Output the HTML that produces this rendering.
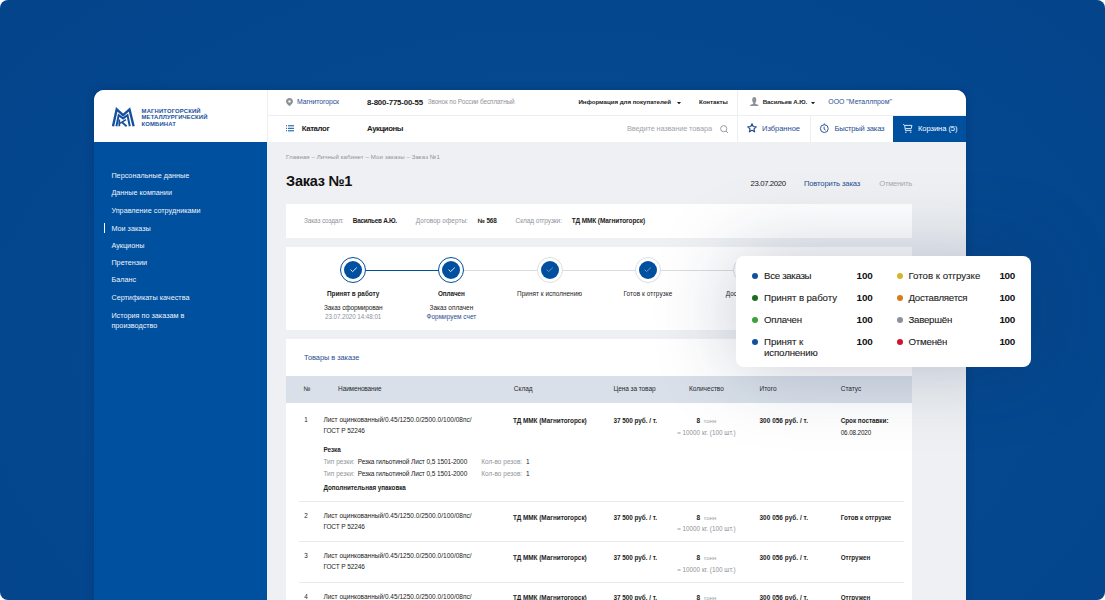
<!DOCTYPE html>
<html><head><meta charset="utf-8"><style>
html,body{margin:0;padding:0;width:1105px;height:600px;overflow:hidden;background:#fff}
#bg{position:absolute;left:0;top:0;width:1105px;height:600px;border-radius:8px;overflow:hidden;
background:radial-gradient(ellipse 820px 560px at 560px 360px, #074b97 0%, #05488f 55%, #03438a 100%)}
.t{position:absolute;white-space:nowrap;line-height:1;font-family:"Liberation Sans", sans-serif}
</style></head><body><div id="bg">
<div style="position:absolute;left:94px;top:90px;width:872px;height:520px;background:#eef0f3;border-radius:10px 10px 0 0;box-shadow:0 0 8px rgba(0,25,70,0.25)"></div>
<div style="position:absolute;left:94px;top:90px;width:173px;height:52px;background:#fff;border-radius:10px 0 0 0"></div>
<div style="position:absolute;left:94px;top:142px;width:173px;height:470px;background:#0050a0"></div>
<div style="position:absolute;left:267px;top:90px;width:699px;height:52px;background:#fff;border-radius:0 10px 0 0"></div>
<div style="position:absolute;left:267px;top:90px;width:1px;height:52px;background:#eceef1"></div>
<div style="position:absolute;left:267px;top:115px;width:699px;height:1px;background:#eceef1"></div>
<div style="position:absolute;left:737px;top:90px;width:1px;height:52px;background:#eceef1"></div>
<div style="position:absolute;left:810px;top:116px;width:1px;height:26px;background:#eceef1"></div>
<div style="position:absolute;left:893px;top:116px;width:73px;height:26px;background:#0050a0"></div>
<svg style="position:absolute;left:109px;top:106px" width="28" height="22" viewBox="0 0 28 22">
<g fill="none" stroke="#17509c" stroke-linejoin="miter" stroke-miterlimit="4" stroke-linecap="butt">
<polyline stroke-width="2.4" points="4,20.2 7.7,3.4 14.1,9.2 20.5,3.4 24.6,20.2"/>
<polyline stroke-width="2" points="7.4,20.2 9.7,9.2 14.1,12.4 18.5,9.2 20.8,20.2"/>
<path stroke-width="1.8" d="M10.3 13.6V20.2"/>
<path stroke-width="1.6" d="M11 17.4L17 13.6"/>
<path stroke-width="1.8" d="M13 16.2L17.6 20.2"/>
</g>
</svg>
<div class="t" style="left:141.60px;top:109.00px;font-size:5.9px;color:#17509c;font-weight:700;letter-spacing:0.153px;">МАГНИТОГОРСКИЙ</div>
<div class="t" style="left:141.60px;top:115.00px;font-size:5.9px;color:#17509c;font-weight:700;letter-spacing:0.106px;">МЕТАЛЛУРГИЧЕСКИЙ</div>
<div class="t" style="left:141.60px;top:122.00px;font-size:5.9px;color:#17509c;font-weight:700;letter-spacing:0.135px;">КОМБИНАТ</div>
<svg style="position:absolute;left:286px;top:98px" width="7" height="8" viewBox="0 0 7 8"><path d="M3.5 0C1.6 0 0 1.5 0 3.4 0 5.5 3.5 8 3.5 8S7 5.5 7 3.4C7 1.5 5.4 0 3.5 0Zm0 4.6a1.2 1.2 0 1 1 0-2.4 1.2 1.2 0 0 1 0 2.4Z" fill="#8d9299"/></svg>
<div class="t" style="left:297.00px;top:99.00px;font-size:6.9px;color:#1f4e93;font-weight:400;letter-spacing:-0.106px;">Магнитогорск</div>
<div class="t" style="left:367.00px;top:99.00px;font-size:7.8px;color:#161616;font-weight:700;letter-spacing:-0.141px;">8-800-775-00-55</div>
<div class="t" style="left:427.70px;top:99.00px;font-size:6.4px;color:#8f949a;font-weight:400;letter-spacing:-0.101px;">Звонок по России бесплатный</div>
<div class="t" style="left:578.40px;top:99.00px;font-size:6.2px;color:#222222;font-weight:700;letter-spacing:-0.052px;">Информация для покупателей</div>
<svg style="position:absolute;left:676.6px;top:101.6px" width="4" height="2.4" viewBox="0 0 4 2.4"><path d="M0 0H4L2 2.4Z" fill="#1e1e1e"/></svg>
<div class="t" style="left:698.90px;top:99.00px;font-size:6.2px;color:#222222;font-weight:700;letter-spacing:-0.042px;">Контакты</div>
<svg style="position:absolute;left:749.5px;top:96.8px" width="9" height="9.2" viewBox="0 0 9 9.2"><ellipse cx="4.25" cy="3.1" rx="2.05" ry="3" fill="#8d9299"/><path d="M3.3 5.6H5.2L5.5 6.9C7 7.1 8.6 7.6 8.6 9.1H0C0 7.6 1.6 7.1 3 6.9Z" fill="#8d9299"/></svg>
<div class="t" style="left:762.70px;top:99.00px;font-size:6.2px;color:#222222;font-weight:700;letter-spacing:-0.133px;">Васильев А.Ю.</div>
<svg style="position:absolute;left:811px;top:101.6px" width="4" height="2.4" viewBox="0 0 4 2.4"><path d="M0 0H4L2 2.4Z" fill="#1e1e1e"/></svg>
<div class="t" style="left:828.30px;top:99.00px;font-size:6.9px;color:#1f4e93;font-weight:400;letter-spacing:0.014px;">ООО "Металлпром"</div>
<svg style="position:absolute;left:286px;top:125px" width="8" height="6.5" viewBox="0 0 8 6.5"><g fill="#0050a0"><rect x="0" y="0.3" width="1" height="1"/><rect x="2" y="0.3" width="6" height="1"/><rect x="0" y="2.8" width="1" height="1"/><rect x="2" y="2.8" width="6" height="1"/><rect x="0" y="5.3" width="1" height="1"/><rect x="2" y="5.3" width="6" height="1"/></g></svg>
<div class="t" style="left:301.70px;top:125.00px;font-size:7.8px;color:#222222;font-weight:700;letter-spacing:-0.360px;">Каталог</div>
<div class="t" style="left:367.00px;top:125.00px;font-size:7.8px;color:#222222;font-weight:700;letter-spacing:-0.450px;">Аукционы</div>
<div class="t" style="left:627.00px;top:125.00px;font-size:7.4px;color:#a0a5ab;font-weight:400;letter-spacing:-0.137px;">Введите название товара</div>
<svg style="position:absolute;left:720px;top:124.5px" width="8.5" height="8.5" viewBox="0 0 8.5 8.5"><circle cx="3.7" cy="3.7" r="3.1" fill="none" stroke="#8d9299" stroke-width="0.9"/><path d="M6 6 L8.1 8.1" stroke="#8d9299" stroke-width="0.9"/></svg>
<svg style="position:absolute;left:747px;top:123.3px" width="10" height="9.6" viewBox="0 0 24 23"><path d="M12 1.8l3 6.6 7.2.8-5.4 4.9 1.5 7.1L12 17.6l-6.3 3.6 1.5-7.1-5.4-4.9 7.2-.8Z" fill="none" stroke="#234e8c" stroke-width="2.9" stroke-linejoin="round"/></svg>
<div class="t" style="left:762.00px;top:125.00px;font-size:7.6px;color:#1f4e93;font-weight:400;letter-spacing:-0.057px;">Избранное</div>
<svg style="position:absolute;left:819px;top:123px" width="11" height="11" viewBox="0 0 11 11"><g fill="none" stroke="#234e8c" stroke-width="0.95"><circle cx="5.3" cy="5.6" r="3.9"/><path d="M5.3 0.5V1.7"/><path d="M5.1 3.6V6.1L6.6 7.1"/></g></svg>
<div class="t" style="left:834.40px;top:125.00px;font-size:7.6px;color:#1f4e93;font-weight:400;letter-spacing:-0.200px;">Быстрый заказ</div>
<svg style="position:absolute;left:902px;top:123px" width="11" height="11" viewBox="0 0 11 11"><g fill="none" stroke="#e6f0ff" stroke-width="0.95"><path d="M1.1 1.3L2.7 2.4"/><path d="M2.7 2.4H9.9L9.2 5.6H3.3"/><path d="M2.7 2.4L3.4 7.4H9.6"/></g><g fill="#e6f0ff"><rect x="3.1" y="8.7" width="1.5" height="1"/><rect x="7.9" y="8.7" width="1.5" height="1"/></g></svg>
<div class="t" style="left:918.00px;top:125.00px;font-size:7.6px;color:#fff;font-weight:400;letter-spacing:-0.077px;">Корзина (5)</div>
<div class="t" style="left:111.40px;top:172.00px;font-size:7.25px;color:#eef3fa;font-weight:400;">Персональные данные</div>
<div class="t" style="left:111.40px;top:189.00px;font-size:7.25px;color:#eef3fa;font-weight:400;">Данные компании</div>
<div class="t" style="left:111.40px;top:207.00px;font-size:7.25px;color:#eef3fa;font-weight:400;">Управление сотрудниками</div>
<div class="t" style="left:111.40px;top:225.00px;font-size:7.25px;color:#eef3fa;font-weight:400;">Мои заказы</div>
<div class="t" style="left:111.40px;top:242.00px;font-size:7.25px;color:#eef3fa;font-weight:400;">Аукционы</div>
<div class="t" style="left:111.40px;top:259.00px;font-size:7.25px;color:#eef3fa;font-weight:400;">Претензии</div>
<div class="t" style="left:111.40px;top:276.00px;font-size:7.25px;color:#eef3fa;font-weight:400;">Баланс</div>
<div class="t" style="left:111.40px;top:294.00px;font-size:7.25px;color:#eef3fa;font-weight:400;">Сертификаты качества</div>
<div class="t" style="left:111.40px;top:312.00px;font-size:7.25px;color:#eef3fa;font-weight:400;">История по заказам в</div>
<div class="t" style="left:111.40px;top:322.00px;font-size:7.25px;color:#eef3fa;font-weight:400;">производство</div>
<div style="position:absolute;left:103.5px;top:223px;width:1.5px;height:9.5px;background:#fff"></div>
<div class="t" style="left:286.00px;top:154.00px;font-size:6.1px;color:#8f949a;font-weight:400;letter-spacing:0.079px;">Главная – Личный кабинет – Мои заказы – Заказ №1</div>
<div class="t" style="left:286.10px;top:174.00px;font-size:14.5px;color:#111;font-weight:700;letter-spacing:-0.264px;">Заказ №1</div>
<div class="t" style="left:750.60px;top:180.00px;font-size:7.8px;color:#222222;font-weight:400;letter-spacing:-0.404px;">23.07.2020</div>
<div class="t" style="left:803.90px;top:180.00px;font-size:7.6px;color:#1f4e93;font-weight:400;letter-spacing:-0.116px;">Повторить заказ</div>
<div class="t" style="left:879.30px;top:180.00px;font-size:7.6px;color:#a6aab0;font-weight:400;letter-spacing:-0.266px;">Отменить</div>
<div style="position:absolute;left:286px;top:204px;width:626px;height:34px;background:#fff"></div>
<div class="t" style="left:304.00px;top:218.00px;font-size:6.5px;color:#8f949a;font-weight:400;letter-spacing:-0.159px;">Заказ создал:</div>
<div class="t" style="left:352.80px;top:218.00px;font-size:6.4px;color:#222222;font-weight:700;letter-spacing:-0.279px;">Васильев А.Ю.</div>
<div class="t" style="left:415.80px;top:218.00px;font-size:6.5px;color:#8f949a;font-weight:400;letter-spacing:0.016px;">Договор оферты:</div>
<div class="t" style="left:477.70px;top:218.00px;font-size:6.4px;color:#222222;font-weight:700;letter-spacing:-0.098px;">№ 568</div>
<div class="t" style="left:515.60px;top:218.00px;font-size:6.5px;color:#8f949a;font-weight:400;letter-spacing:-0.079px;">Склад отгрузки:</div>
<div class="t" style="left:571.70px;top:218.00px;font-size:6.5px;color:#222222;font-weight:700;letter-spacing:-0.096px;">ТД ММК (Магнитогорск)</div>
<div style="position:absolute;left:286px;top:247px;width:626px;height:83px;background:#fff"></div>
<div style="position:absolute;left:353px;top:269.6px;width:98.4px;height:1px;background:#0050a0"></div>
<div style="position:absolute;left:451.4px;top:269.6px;width:393.1px;height:1px;background:#d9dce0"></div>
<div style="position:absolute;left:340.10px;top:256.9px;width:24.2px;height:24.2px;border:1px solid #0050a0;border-radius:50%;background:#fff;box-sizing:content-box"></div>
<div style="position:absolute;left:344.20px;top:261px;width:18px;height:18px;border-radius:50%;background:#0050a0"></div>
<svg style="position:absolute;left:349.60px;top:267.4px" width="7.4" height="5.4" viewBox="0 0 7.4 5.4"><path d="M0.6 2.7L2.6 4.6L6.8 0.6" fill="none" stroke="#fff" stroke-width="0.9"/></svg>
<div style="position:absolute;left:438.30px;top:256.9px;width:24.2px;height:24.2px;border:1px solid #0050a0;border-radius:50%;background:#fff;box-sizing:content-box"></div>
<div style="position:absolute;left:442.40px;top:261px;width:18px;height:18px;border-radius:50%;background:#0050a0"></div>
<svg style="position:absolute;left:447.80px;top:267.4px" width="7.4" height="5.4" viewBox="0 0 7.4 5.4"><path d="M0.6 2.7L2.6 4.6L6.8 0.6" fill="none" stroke="#fff" stroke-width="0.9"/></svg>
<div style="position:absolute;left:536.50px;top:256.9px;width:24.2px;height:24.2px;border:1px solid #dcdfe3;border-radius:50%;background:#fff;box-sizing:content-box"></div>
<div style="position:absolute;left:540.60px;top:261px;width:18px;height:18px;border-radius:50%;background:#0050a0"></div>
<svg style="position:absolute;left:546.00px;top:267.4px" width="7.4" height="5.4" viewBox="0 0 7.4 5.4"><path d="M0.6 2.7L2.6 4.6L6.8 0.6" fill="none" stroke="#7f9cc8" stroke-width="0.9"/></svg>
<div style="position:absolute;left:634.80px;top:256.9px;width:24.2px;height:24.2px;border:1px solid #dcdfe3;border-radius:50%;background:#fff;box-sizing:content-box"></div>
<div style="position:absolute;left:638.90px;top:261px;width:18px;height:18px;border-radius:50%;background:#0050a0"></div>
<svg style="position:absolute;left:644.30px;top:267.4px" width="7.4" height="5.4" viewBox="0 0 7.4 5.4"><path d="M0.6 2.7L2.6 4.6L6.8 0.6" fill="none" stroke="#7f9cc8" stroke-width="0.9"/></svg>
<div style="position:absolute;left:733.10px;top:256.9px;width:24.2px;height:24.2px;border:1px solid #dcdfe3;border-radius:50%;background:#fff;box-sizing:content-box"></div>
<div style="position:absolute;left:831.40px;top:256.9px;width:24.2px;height:24.2px;border:1px solid #dcdfe3;border-radius:50%;background:#fff;box-sizing:content-box"></div>
<div class="t" style="left:353.20px;top:291.00px;font-size:6.4px;color:#222222;font-weight:700;letter-spacing:-0.013px;transform:translateX(-50%);transform-origin:50% 0;">Принят в работу</div>
<div class="t" style="left:451.40px;top:291.00px;font-size:6.4px;color:#222222;font-weight:700;letter-spacing:-0.064px;transform:translateX(-50%);transform-origin:50% 0;">Оплачен</div>
<div class="t" style="left:549.60px;top:291.00px;font-size:6.4px;color:#222222;font-weight:400;letter-spacing:0.036px;transform:translateX(-50%);transform-origin:50% 0;">Принят к исполнению</div>
<div class="t" style="left:647.90px;top:291.00px;font-size:6.4px;color:#222222;font-weight:400;letter-spacing:0.102px;transform:translateX(-50%);transform-origin:50% 0;">Готов к отгрузке</div>
<div class="t" style="left:746.20px;top:291.00px;font-size:6.4px;color:#222222;font-weight:400;transform:translateX(-50%);transform-origin:50% 0;">Доставляется</div>
<div class="t" style="left:844.50px;top:291.00px;font-size:6.4px;color:#222222;font-weight:400;transform:translateX(-50%);transform-origin:50% 0;">Завершён</div>
<div class="t" style="left:353.30px;top:305.00px;font-size:6.5px;color:#222222;font-weight:400;letter-spacing:-0.118px;transform:translateX(-50%);transform-origin:50% 0;">Заказ сформирован</div>
<div class="t" style="left:353.10px;top:314.00px;font-size:6.3px;color:#8d9299;font-weight:400;letter-spacing:-0.079px;transform:translateX(-50%);transform-origin:50% 0;">23.07.2020 14:48:01</div>
<div class="t" style="left:451.40px;top:305.00px;font-size:6.5px;color:#222222;font-weight:400;transform:translateX(-50%);transform-origin:50% 0;">Заказ оплачен</div>
<div class="t" style="left:451.40px;top:314.00px;font-size:6.5px;color:#1f4e93;font-weight:400;transform:translateX(-50%);transform-origin:50% 0;">Формируем счет</div>
<div style="position:absolute;left:286px;top:338.5px;width:626px;height:300px;background:#fff"></div>
<div class="t" style="left:304.10px;top:354.00px;font-size:7.4px;color:#1f4e93;font-weight:400;letter-spacing:-0.044px;">Товары в заказе</div>
<div style="position:absolute;left:286px;top:376px;width:626px;height:27px;background:#d9e0e9"></div>
<div class="t" style="left:303.50px;top:386.00px;font-size:6.5px;color:#2a2a2a;font-weight:400;">№</div>
<div class="t" style="left:338.10px;top:386.00px;font-size:6.5px;color:#2a2a2a;font-weight:400;letter-spacing:-0.138px;">Наименование</div>
<div class="t" style="left:513.80px;top:386.00px;font-size:6.5px;color:#2a2a2a;font-weight:400;">Склад</div>
<div class="t" style="left:613.40px;top:386.00px;font-size:6.5px;color:#2a2a2a;font-weight:400;letter-spacing:-0.067px;">Цена за товар</div>
<div class="t" style="left:688.90px;top:386.00px;font-size:6.5px;color:#2a2a2a;font-weight:400;letter-spacing:0.009px;">Количество</div>
<div class="t" style="left:759.50px;top:386.00px;font-size:6.5px;color:#2a2a2a;font-weight:400;">Итого</div>
<div class="t" style="left:840.70px;top:386.00px;font-size:6.5px;color:#2a2a2a;font-weight:400;">Статус</div>
<div class="t" style="left:304.30px;top:417.00px;font-size:6.3px;color:#222222;font-weight:400;">1</div>
<div class="t" style="left:323.40px;top:417.00px;font-size:6.5px;color:#222222;font-weight:400;letter-spacing:0.013px;">Лист оцинкованный/0.45/1250.0/2500.0/100/08пс/</div>
<div class="t" style="left:323.40px;top:428.00px;font-size:6.5px;color:#222222;font-weight:400;letter-spacing:-0.115px;">ГОСТ Р 52246</div>
<div class="t" style="left:513.00px;top:418.00px;font-size:6.4px;color:#222222;font-weight:700;letter-spacing:-0.022px;">ТД ММК (Магнитогорск)</div>
<div class="t" style="left:613.40px;top:418.00px;font-size:6.4px;color:#222222;font-weight:700;letter-spacing:-0.035px;">37 500 руб. / т.</div>
<div class="t" style="left:706.40px;top:418px;font-size:6.5px;transform:translateX(-50%);color:#222222"><b>8</b><span style="color:#9a9fa6;font-size:6.1px">&nbsp;&nbsp;тонн</span></div>
<div class="t" style="left:706.40px;top:430.00px;font-size:6.3px;color:#8d9299;font-weight:400;letter-spacing:0.033px;transform:translateX(-50%);transform-origin:50% 0;">≈ 10000 кг. (100 шт.)</div>
<div class="t" style="left:759.50px;top:418.00px;font-size:6.4px;color:#222222;font-weight:700;letter-spacing:0.052px;">300 056 руб. / т.</div>
<div class="t" style="left:840.70px;top:418.00px;font-size:6.3px;color:#222222;font-weight:700;">Срок поставки:</div>
<div class="t" style="left:840.70px;top:430.00px;font-size:6.3px;color:#222222;font-weight:400;letter-spacing:-0.103px;">06.08.2020</div>
<div class="t" style="left:323.40px;top:447.00px;font-size:6.3px;color:#222222;font-weight:700;">Резка</div>
<div class="t" style="left:323.40px;top:459.00px;font-size:6.5px;color:#8f949a;font-weight:400;letter-spacing:0.031px;">Тип резки:</div>
<div class="t" style="left:357.70px;top:459.00px;font-size:6.5px;color:#222222;font-weight:400;letter-spacing:-0.091px;">Резка гильотиной Лист 0,5 1501-2000</div>
<div class="t" style="left:481.20px;top:459.00px;font-size:6.5px;color:#8f949a;font-weight:400;letter-spacing:0.009px;">Кол-во резов:</div>
<div class="t" style="left:526.00px;top:459.00px;font-size:6.5px;color:#222222;font-weight:400;">1</div>
<div class="t" style="left:323.40px;top:471.00px;font-size:6.5px;color:#8f949a;font-weight:400;letter-spacing:0.031px;">Тип резки:</div>
<div class="t" style="left:357.70px;top:471.00px;font-size:6.5px;color:#222222;font-weight:400;letter-spacing:-0.091px;">Резка гильотиной Лист 0,5 1501-2000</div>
<div class="t" style="left:481.20px;top:471.00px;font-size:6.5px;color:#8f949a;font-weight:400;letter-spacing:0.009px;">Кол-во резов:</div>
<div class="t" style="left:526.00px;top:471.00px;font-size:6.5px;color:#222222;font-weight:400;">1</div>
<div class="t" style="left:323.40px;top:485.00px;font-size:6.3px;color:#222222;font-weight:700;letter-spacing:-0.024px;">Дополнительная упаковка</div>
<div style="position:absolute;left:298.6px;top:501px;width:605px;height:1px;background:#e8eaed"></div>
<div class="t" style="left:304.30px;top:513.00px;font-size:6.3px;color:#222222;font-weight:400;">2</div>
<div class="t" style="left:323.40px;top:513.00px;font-size:6.5px;color:#222222;font-weight:400;letter-spacing:0.013px;">Лист оцинкованный/0.45/1250.0/2500.0/100/08пс/</div>
<div class="t" style="left:323.40px;top:524.00px;font-size:6.5px;color:#222222;font-weight:400;letter-spacing:-0.115px;">ГОСТ Р 52246</div>
<div class="t" style="left:513.00px;top:515.00px;font-size:6.4px;color:#222222;font-weight:700;letter-spacing:-0.022px;">ТД ММК (Магнитогорск)</div>
<div class="t" style="left:613.40px;top:515.00px;font-size:6.4px;color:#222222;font-weight:700;letter-spacing:-0.035px;">37 500 руб. / т.</div>
<div class="t" style="left:706.40px;top:515px;font-size:6.5px;transform:translateX(-50%);color:#222222"><b>8</b><span style="color:#9a9fa6;font-size:6.1px">&nbsp;&nbsp;тонн</span></div>
<div class="t" style="left:706.40px;top:526.00px;font-size:6.3px;color:#8d9299;font-weight:400;letter-spacing:0.033px;transform:translateX(-50%);transform-origin:50% 0;">≈ 10000 кг. (100 шт.)</div>
<div class="t" style="left:759.50px;top:515.00px;font-size:6.4px;color:#222222;font-weight:700;letter-spacing:0.052px;">300 056 руб. / т.</div>
<div class="t" style="left:840.70px;top:515.00px;font-size:6.3px;color:#222222;font-weight:700;">Готов к отгрузке</div>
<div style="position:absolute;left:298.6px;top:541px;width:605px;height:1px;background:#e8eaed"></div>
<div class="t" style="left:304.30px;top:553.00px;font-size:6.3px;color:#222222;font-weight:400;">3</div>
<div class="t" style="left:323.40px;top:553.00px;font-size:6.5px;color:#222222;font-weight:400;letter-spacing:0.013px;">Лист оцинкованный/0.45/1250.0/2500.0/100/08пс/</div>
<div class="t" style="left:323.40px;top:564.00px;font-size:6.5px;color:#222222;font-weight:400;letter-spacing:-0.115px;">ГОСТ Р 52246</div>
<div class="t" style="left:513.00px;top:555.00px;font-size:6.4px;color:#222222;font-weight:700;letter-spacing:-0.022px;">ТД ММК (Магнитогорск)</div>
<div class="t" style="left:613.40px;top:555.00px;font-size:6.4px;color:#222222;font-weight:700;letter-spacing:-0.035px;">37 500 руб. / т.</div>
<div class="t" style="left:706.40px;top:555px;font-size:6.5px;transform:translateX(-50%);color:#222222"><b>8</b><span style="color:#9a9fa6;font-size:6.1px">&nbsp;&nbsp;тонн</span></div>
<div class="t" style="left:706.40px;top:567.00px;font-size:6.3px;color:#8d9299;font-weight:400;letter-spacing:0.033px;transform:translateX(-50%);transform-origin:50% 0;">≈ 10000 кг. (100 шт.)</div>
<div class="t" style="left:759.50px;top:555.00px;font-size:6.4px;color:#222222;font-weight:700;letter-spacing:0.052px;">300 056 руб. / т.</div>
<div class="t" style="left:840.70px;top:555.00px;font-size:6.3px;color:#222222;font-weight:700;">Отгружен</div>
<div style="position:absolute;left:298.6px;top:581.6px;width:605px;height:1px;background:#e8eaed"></div>
<div class="t" style="left:304.30px;top:594.00px;font-size:6.3px;color:#222222;font-weight:400;">4</div>
<div class="t" style="left:323.40px;top:594.00px;font-size:6.5px;color:#222222;font-weight:400;letter-spacing:0.013px;">Лист оцинкованный/0.45/1250.0/2500.0/100/08пс/</div>
<div class="t" style="left:323.40px;top:605.00px;font-size:6.5px;color:#222222;font-weight:400;letter-spacing:-0.115px;">ГОСТ Р 52246</div>
<div class="t" style="left:513.00px;top:595.00px;font-size:6.4px;color:#222222;font-weight:700;letter-spacing:-0.022px;">ТД ММК (Магнитогорск)</div>
<div class="t" style="left:613.40px;top:595.00px;font-size:6.4px;color:#222222;font-weight:700;letter-spacing:-0.035px;">37 500 руб. / т.</div>
<div class="t" style="left:706.40px;top:595px;font-size:6.5px;transform:translateX(-50%);color:#222222"><b>8</b><span style="color:#9a9fa6;font-size:6.1px">&nbsp;&nbsp;тонн</span></div>
<div class="t" style="left:706.40px;top:607.00px;font-size:6.3px;color:#8d9299;font-weight:400;letter-spacing:0.033px;transform:translateX(-50%);transform-origin:50% 0;">≈ 10000 кг. (100 шт.)</div>
<div class="t" style="left:759.50px;top:595.00px;font-size:6.4px;color:#222222;font-weight:700;letter-spacing:0.052px;">300 056 руб. / т.</div>
<div class="t" style="left:840.70px;top:595.00px;font-size:6.3px;color:#222222;font-weight:700;">Отгружен</div>
<div style="position:absolute;left:735.6px;top:256px;width:295.4px;height:110.5px;background:#fff;border-radius:8px;box-shadow:0 0 80px rgba(20,40,80,0.26)"></div>
<div style="position:absolute;left:751.8px;top:272.6px;width:6.2px;height:6.2px;border-radius:50%;background:#1250a0"></div>
<div class="t" style="left:764.00px;top:271.00px;font-size:9.7px;color:#222;font-weight:400;letter-spacing:-0.311px;-webkit-text-stroke:0.1px #222;">Все заказы</div>
<div class="t" style="left:856.60px;top:271.00px;font-size:9.9px;color:#111;font-weight:700;letter-spacing:-0.106px;">100</div>
<div style="position:absolute;left:751.8px;top:295.0px;width:6.2px;height:6.2px;border-radius:50%;background:#1f6b1f"></div>
<div class="t" style="left:764.00px;top:293.00px;font-size:9.7px;color:#222;font-weight:400;letter-spacing:-0.087px;-webkit-text-stroke:0.1px #222;">Принят в работу</div>
<div class="t" style="left:856.60px;top:293.00px;font-size:9.9px;color:#111;font-weight:700;letter-spacing:-0.106px;">100</div>
<div style="position:absolute;left:751.8px;top:317.0px;width:6.2px;height:6.2px;border-radius:50%;background:#3aa33a"></div>
<div class="t" style="left:764.00px;top:315.00px;font-size:9.7px;color:#222;font-weight:400;letter-spacing:-0.235px;-webkit-text-stroke:0.1px #222;">Оплачен</div>
<div class="t" style="left:856.60px;top:315.00px;font-size:9.9px;color:#111;font-weight:700;letter-spacing:-0.106px;">100</div>
<div style="position:absolute;left:751.8px;top:338.8px;width:6.2px;height:6.2px;border-radius:50%;background:#1250a0"></div>
<div class="t" style="left:764.00px;top:337.00px;font-size:9.7px;color:#222;font-weight:400;letter-spacing:-0.060px;-webkit-text-stroke:0.1px #222;">Принят к</div>
<div class="t" style="left:856.60px;top:337.00px;font-size:9.9px;color:#111;font-weight:700;letter-spacing:-0.106px;">100</div>
<div class="t" style="left:764.00px;top:348.00px;font-size:9.7px;color:#222;font-weight:400;letter-spacing:-0.136px;-webkit-text-stroke:0.1px #222;">исполнению</div>
<div style="position:absolute;left:896.6px;top:272.6px;width:6.2px;height:6.2px;border-radius:50%;background:#d6b52c"></div>
<div class="t" style="left:908.40px;top:271.00px;font-size:9.7px;color:#222;font-weight:400;letter-spacing:0.013px;-webkit-text-stroke:0.1px #222;">Готов к отгрузке</div>
<div class="t" style="left:999.50px;top:271.00px;font-size:9.9px;color:#111;font-weight:700;letter-spacing:-0.406px;">100</div>
<div style="position:absolute;left:896.6px;top:295.0px;width:6.2px;height:6.2px;border-radius:50%;background:#d97b1c"></div>
<div class="t" style="left:908.40px;top:293.00px;font-size:9.7px;color:#222;font-weight:400;letter-spacing:-0.250px;-webkit-text-stroke:0.1px #222;">Доставляется</div>
<div class="t" style="left:999.50px;top:293.00px;font-size:9.9px;color:#111;font-weight:700;letter-spacing:-0.406px;">100</div>
<div style="position:absolute;left:896.6px;top:317.0px;width:6.2px;height:6.2px;border-radius:50%;background:#8c9199"></div>
<div class="t" style="left:908.40px;top:315.00px;font-size:9.7px;color:#222;font-weight:400;letter-spacing:-0.240px;-webkit-text-stroke:0.1px #222;">Завершён</div>
<div class="t" style="left:999.50px;top:315.00px;font-size:9.9px;color:#111;font-weight:700;letter-spacing:-0.406px;">100</div>
<div style="position:absolute;left:896.6px;top:338.8px;width:6.2px;height:6.2px;border-radius:50%;background:#cf1330"></div>
<div class="t" style="left:908.40px;top:337.00px;font-size:9.7px;color:#222;font-weight:400;letter-spacing:-0.194px;-webkit-text-stroke:0.1px #222;">Отменён</div>
<div class="t" style="left:999.50px;top:337.00px;font-size:9.9px;color:#111;font-weight:700;letter-spacing:-0.406px;">100</div>
</div></body></html>
